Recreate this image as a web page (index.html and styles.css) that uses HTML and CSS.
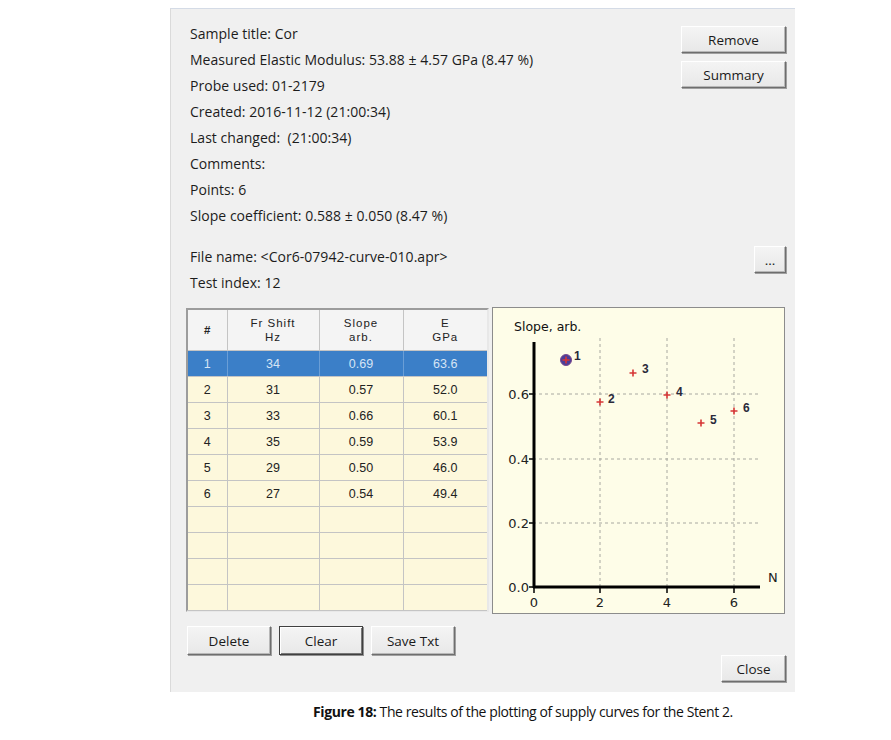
FILE: index.html
```html
<!DOCTYPE html>
<html>
<head>
<meta charset="utf-8">
<link rel="stylesheet" href="styles.css">
</head>
<body>
<div class="page">
  <div class="panel">
    <div class="head">
      <div class="info">
        <div class="line">Sample title: Cor</div>
        <div class="line">Measured Elastic Modulus: 53.88 ± 4.57 GPa (8.47 %)</div>
        <div class="line">Probe used: 01-2179</div>
        <div class="line">Created: 2016-11-12 (21:00:34)</div>
        <div class="line">Last changed:&nbsp; (21:00:34)</div>
        <div class="line">Comments:</div>
        <div class="line">Points: 6</div>
        <div class="line">Slope coefficient: 0.588 ± 0.050 (8.47 %)</div>
      </div>
      <div class="side">
        <button class="btn wide">Remove</button>
        <button class="btn wide">Summary</button>
      </div>
    </div>
    <div class="filerow">
      <div class="info">
        <div class="line">File name: &lt;Cor6-07942-curve-010.apr&gt;</div>
        <div class="line">Test index: 12</div>
      </div>
      <button class="btn dots">...</button>
    </div>
    <div class="main">
      <div class="grid">
        <table>
          <colgroup><col class="c1"><col class="c2"><col class="c3"><col class="c4"></colgroup>
          <thead>
            <tr><th>#</th><th>Fr Shift<br>Hz</th><th>Slope<br>arb.</th><th>E<br>GPa</th></tr>
          </thead>
          <tbody>
            <tr class="sel"><td>1</td><td>34</td><td>0.69</td><td>63.6</td></tr>
            <tr><td>2</td><td>31</td><td>0.57</td><td>52.0</td></tr>
            <tr><td>3</td><td>33</td><td>0.66</td><td>60.1</td></tr>
            <tr><td>4</td><td>35</td><td>0.59</td><td>53.9</td></tr>
            <tr><td>5</td><td>29</td><td>0.50</td><td>46.0</td></tr>
            <tr><td>6</td><td>27</td><td>0.54</td><td>49.4</td></tr>
            <tr><td></td><td></td><td></td><td></td></tr>
            <tr><td></td><td></td><td></td><td></td></tr>
            <tr><td></td><td></td><td></td><td></td></tr>
            <tr><td></td><td></td><td></td><td></td></tr>
          </tbody>
        </table>
      </div>
      <div class="chart">
        <svg width="293" height="307" viewBox="0 0 293 307">
          <text x="22" y="24" class="title">Slope, arb.</text>
          <g class="gridl">
            <line x1="108" y1="31" x2="108" y2="280"/>
            <line x1="175" y1="31" x2="175" y2="280"/>
            <line x1="242" y1="31" x2="242" y2="280"/>
            <line x1="41" y1="87" x2="268" y2="87"/>
            <line x1="41" y1="152" x2="268" y2="152"/>
            <line x1="41" y1="216" x2="268" y2="216"/>
          </g>
          <g class="axis">
            <line x1="42" y1="35" x2="42" y2="281"/>
            <line x1="41" y1="280" x2="268" y2="280"/>
          </g>
          <g class="ticks">
            <line x1="37" y1="87" x2="42" y2="87"/>
            <line x1="37" y1="152" x2="42" y2="152"/>
            <line x1="37" y1="216" x2="42" y2="216"/>
            <line x1="37" y1="280" x2="42" y2="280"/>
            <line x1="42" y1="280" x2="42" y2="286"/>
            <line x1="108" y1="280" x2="108" y2="286"/>
            <line x1="175" y1="280" x2="175" y2="286"/>
            <line x1="242" y1="280" x2="242" y2="286"/>
          </g>
          <g class="lbl">
            <text x="37" y="92" text-anchor="end">0.6</text>
            <text x="37" y="157" text-anchor="end">0.4</text>
            <text x="37" y="221" text-anchor="end">0.2</text>
            <text x="37" y="285" text-anchor="end">0.0</text>
            <text x="42" y="300" text-anchor="middle">0</text>
            <text x="108" y="300" text-anchor="middle">2</text>
            <text x="175" y="300" text-anchor="middle">4</text>
            <text x="242" y="300" text-anchor="middle">6</text>
            <text x="276" y="275">N</text>
          </g>
          <circle cx="74" cy="53" r="5.5" class="selpt"/>
          <g class="plus">
            <path d="M70.5 53h7M74 49.5v7"/>
            <path d="M104.5 95h7M108 91.5v7"/>
            <path d="M137.5 66h7M141 62.5v7"/>
            <path d="M171.5 88h7M175 84.5v7"/>
            <path d="M205.5 116h7M209 112.5v7"/>
            <path d="M238.5 104h7M242 100.5v7"/>
          </g>
          <g class="ptl">
            <text x="82" y="53">1</text>
            <text x="116" y="96">2</text>
            <text x="150" y="66">3</text>
            <text x="184" y="89">4</text>
            <text x="218" y="117">5</text>
            <text x="251" y="105">6</text>
          </g>
        </svg>
      </div>
    </div>
    <div class="actions">
      <button class="btn act">Delete</button>
      <button class="btn act def">Clear</button>
      <button class="btn act">Save Txt</button>
    </div>
    <div class="footer">
      <button class="btn close">Close</button>
    </div>
  </div>
  <div class="caption"><b>Figure 18:</b> The results of the plotting of supply curves for the Stent 2.</div>
</div>
</body>
</html>
```

FILE: styles.css
```css
html, body { margin: 0; padding: 0; background: #ffffff; }
body { font-family: "Open Sans", "Noto Sans", sans-serif; color: #1a1a1a; }

.page { width: 891px; height: 740px; padding-top: 8px; box-sizing: border-box; }

.panel {
  margin-left: 170px;
  width: 625px;
  height: 684px;
  box-sizing: border-box;
  background: #f0f0f0;
  border-top: 1px solid #d4dbe6;
  border-left: 1px solid #dadada;
  padding: 12px 9px 0 15px;
  display: flex;
  flex-direction: column;
}

.head { display: flex; justify-content: space-between; align-items: flex-start; }
.info { padding-left: 4px; }
.line { height: 26px; line-height: 26px; font-size: 14px; letter-spacing: 0.03px; white-space: nowrap; color: #1c1c1c; }

.side { display: flex; flex-direction: column; gap: 8px; padding-top: 5px; }

.btn {
  font-family: "Open Sans", "Noto Sans", sans-serif;
  font-size: 13.5px;
  color: #1a1a1a;
  background: linear-gradient(#f4f4f4, #e8e8e8);
  border: 1px solid;
  border-color: #ffffff #6e6e6e #6e6e6e #ffffff;
  box-shadow: 1px 1px 0 #a0a0a0, inset -1px -1px 0 #b8b8b8;
  padding: 0;
  margin: 0;
}
.wide { width: 105px; height: 27px; }

.filerow { display: flex; justify-content: space-between; align-items: flex-start; margin-top: 15px; }
.dots { width: 32px; height: 27px; margin-top: 2px; line-height: 20px; }

.main { display: flex; gap: 3px; margin-top: 12px; }

.grid {
  width: 303px;
  height: 304px;
  box-sizing: border-box;
  border: 2px solid;
  border-color: #9c9c9c #e8e8e8 #e8e8e8 #9c9c9c;
  background: #fdf8dc;
}
table {
  border-collapse: collapse;
  table-layout: fixed;
  width: 299px;
  font-family: "Liberation Sans", Arial, sans-serif;
  font-size: 12.5px;
  color: #222;
}
col.c1 { width: 39px; }
col.c2 { width: 92px; }
col.c3 { width: 84px; }
col.c4 { width: 84px; }
th {
  height: 40px;
  padding: 0;
  font-weight: normal;
  font-size: 11.5px;
  letter-spacing: 1px;
  line-height: 14px;
  background: #f4f4f4;
  border-right: 1px solid #c4c4c4;
  border-bottom: 1px solid #c4c4c4;
  text-align: center;
}
th:first-child { font-weight: bold; letter-spacing: 0; }
td {
  height: 25px;
  padding: 0;
  text-align: center;
  border-right: 1px solid #c4c4c4;
  border-bottom: 1px solid #c4c4c4;
  background: #fdf8dc;
}
th:last-child, td:last-child { border-right: none; }
tr.sel td { background: #3b7fc8; color: #d6e4f4; border-right-color: #6a9ed6; }

.chart {
  width: 293px;
  height: 307px;
  box-sizing: border-box;
  border: 1px solid #8c8c8c;
  background: #fefde8;
  overflow: hidden;
  margin-top: -1px;
}
.chart svg { display: block; margin: -1px 0 0 -1px; }
.title { font-family: "DejaVu Sans", sans-serif; font-size: 12.5px; fill: #111; }
.gridl line { stroke: #a8a8a0; stroke-width: 1; stroke-dasharray: 3 3; }
.axis line { stroke: #000; stroke-width: 3; }
.ticks line { stroke: #000; stroke-width: 1.5; }
.lbl text { font-family: "DejaVu Sans", sans-serif; font-size: 13px; fill: #222; }
.selpt { fill: #4a3d9a; stroke: #7c4a8c; stroke-width: 1; }
.plus path { stroke: #d63636; stroke-width: 1.6; fill: none; }
.ptl text { font-family: "Liberation Sans", Arial, sans-serif; font-size: 12px; font-weight: bold; fill: #2a2a3a; }

.actions { display: flex; gap: 8px; margin-top: 12px; padding-left: 1px; }
.act { width: 84px; height: 29px; }
.def { border-color: #404040; box-shadow: 1px 1px 0 #909090, inset 1px 1px 0 #fff, inset -1px -1px 0 #777; }

.footer { display: flex; justify-content: flex-end; margin-top: 0; }
.close { width: 65px; height: 27px; }

.caption {
  margin-top: 10px;
  padding-left: 313px;
  font-family: "Open Sans", "Noto Sans", sans-serif;
  font-size: 14px;
  letter-spacing: -0.4px;
  color: #111;
  white-space: nowrap;
}
```
